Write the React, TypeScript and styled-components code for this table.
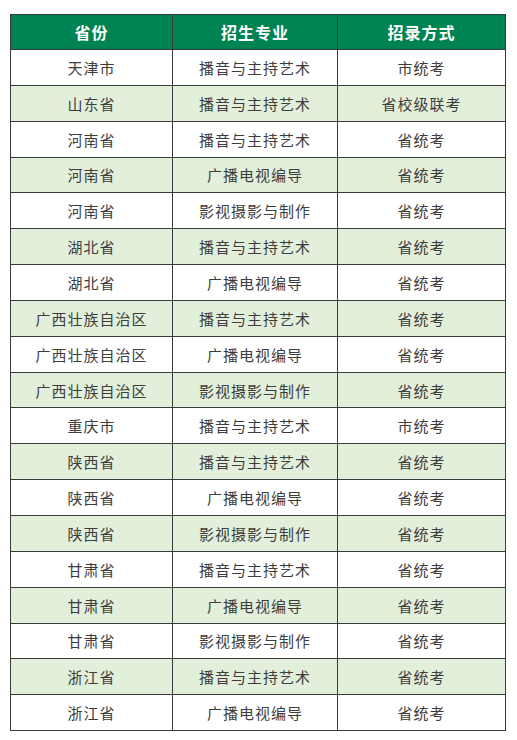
import React from "react";
import styled, { createGlobalStyle } from "styled-components";

const GlobalStyle = createGlobalStyle`
  html, body {
    margin: 0;
    padding: 0;
    background: #ffffff;
  }
  body {
    font-family: "Noto Sans CJK SC", "Noto Sans", sans-serif;
  }
`;

const Page = styled.div`
  width: 517px;
  height: 740px;
  padding: 14px 12px 0 10px;
  box-sizing: border-box;
  background: #ffffff;
`;

const Table = styled.table`
  width: 495px;
  border-collapse: collapse;
  table-layout: fixed;
  border: 1px solid #3a3a3a;
`;

const HeadCell = styled.th`
  height: 34px;
  padding: 0;
  background: #008352;
  color: #ffffff;
  font-size: 16px;
  font-weight: 700;
  letter-spacing: 1px;
  text-align: center;
  border: 1px solid #3a3a3a;
`;

const Row = styled.tr<{ $shaded: boolean }>`
  background: ${(p) => (p.$shaded ? "#e2efda" : "#ffffff")};
`;

const Cell = styled.td`
  height: 34.85px;
  padding: 0;
  color: #3d3d3d;
  font-size: 15px;
  letter-spacing: 1px;
  text-align: center;
  border: 1px solid #3a3a3a;
`;

const rows: [string, string, string][] = [
  ["天津市", "播音与主持艺术", "市统考"],
  ["山东省", "播音与主持艺术", "省校级联考"],
  ["河南省", "播音与主持艺术", "省统考"],
  ["河南省", "广播电视编导", "省统考"],
  ["河南省", "影视摄影与制作", "省统考"],
  ["湖北省", "播音与主持艺术", "省统考"],
  ["湖北省", "广播电视编导", "省统考"],
  ["广西壮族自治区", "播音与主持艺术", "省统考"],
  ["广西壮族自治区", "广播电视编导", "省统考"],
  ["广西壮族自治区", "影视摄影与制作", "省统考"],
  ["重庆市", "播音与主持艺术", "市统考"],
  ["陕西省", "播音与主持艺术", "省统考"],
  ["陕西省", "广播电视编导", "省统考"],
  ["陕西省", "影视摄影与制作", "省统考"],
  ["甘肃省", "播音与主持艺术", "省统考"],
  ["甘肃省", "广播电视编导", "省统考"],
  ["甘肃省", "影视摄影与制作", "省统考"],
  ["浙江省", "播音与主持艺术", "省统考"],
  ["浙江省", "广播电视编导", "省统考"],
];

export default function App() {
  return (
    <Page>
      <GlobalStyle />
      <Table>
        <colgroup>
          <col style={{ width: 162 }} />
          <col style={{ width: 165 }} />
          <col style={{ width: 168 }} />
        </colgroup>
        <thead>
          <tr>
            <HeadCell>省份</HeadCell>
            <HeadCell>招生专业</HeadCell>
            <HeadCell>招录方式</HeadCell>
          </tr>
        </thead>
        <tbody>
          {rows.map((r, i) => (
            <Row key={i} $shaded={i % 2 === 1}>
              <Cell>{r[0]}</Cell>
              <Cell>{r[1]}</Cell>
              <Cell>{r[2]}</Cell>
            </Row>
          ))}
        </tbody>
      </Table>
    </Page>
  );
}
